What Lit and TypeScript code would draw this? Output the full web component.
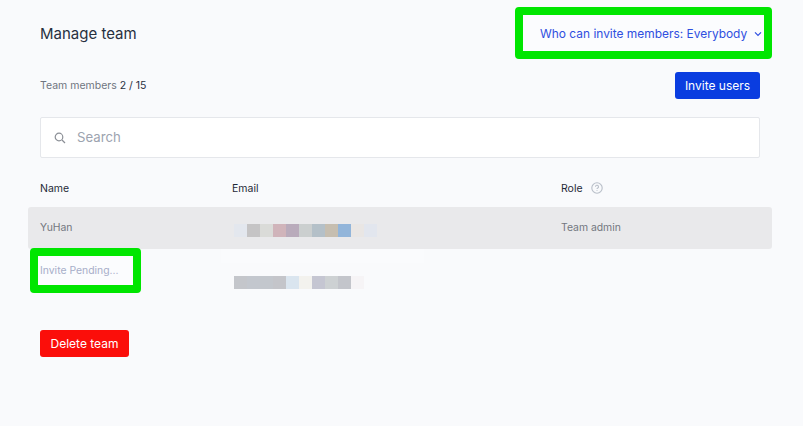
import { LitElement, html, css } from "lit";
import { customElement } from "lit/decorators.js";

const ROW1 = ["#e3e7ee","#c5c4c5","#dadbd8","#d0b4ba","#b9abbb","#cbcfcf","#b4c0c8","#c6beb0","#92b5da","#e9e6e4","#e2e6ee"];
const ROW2 = ["#c4c6cb","#c3c7ce","#c3c7cd","#c4c5ca","#dae5ef","#f3f2ee","#c5c6d2","#cdd1d3","#c3c5cb","#f6f4f6"];

@customElement("app-root")
export class AppRoot extends LitElement {
  static styles = css`
    :host { display: block; width: 803px; height: 426px; overflow: hidden; }
    .page {
      box-sizing: border-box; width: 803px; height: 426px; background: #f9fafc;
      padding: 7px 43px 0 40px; font-family: Inter, "Liberation Sans", sans-serif;
      color: #1f2937;
    }
    .head { display: flex; justify-content: space-between; align-items: center; height: 52px; margin-right: -12px; }
    .title { font-size: 15px; font-weight: 400; color: #27303f; margin: 0; }
    .mark { box-sizing: border-box; border: 8px solid #00e600; border-radius: 4px; background: #fbfcfe; }
    .who {
      width: 257px; height: 52px; display: flex; align-items: center; gap: 6px; padding-left: 17px;
      font-size: 11.95px; color: #2f4fe0; white-space: nowrap;
    }
    .who svg { display: block; margin-top: 1px; margin-left: 1px; flex: none; }
    .members { display: flex; justify-content: space-between; align-items: center; margin-top: 12px; height: 28px; }
    .count { font-size: 10.5px; color: #6f7580; }
    .count b { font-weight: 400; color: #27303f; }
    .btn {
      border: 0; border-radius: 3px; font-family: inherit; color: #fff; font-size: 12px;
      display: flex; align-items: center; justify-content: center; padding: 0;
    }
    .invite { width: 85px; height: 27px; background: #0a3de0; }
    .search {
      box-sizing: border-box; margin-top: 18px; height: 41px; background: #fff; border: 1px solid #e5e7eb;
      display: flex; align-items: center; gap: 11px; padding-left: 13px; border-radius: 2px;
      font-size: 13.2px; color: #9ca3af;
    }
    .search span { margin-top: -1px; }
    .cols { display: grid; grid-template-columns: 192px 329px 1fr; }
    .th { margin-top: 11px; height: 38px; align-items: center; font-size: 10.5px; color: #1f2937; }
    .th > div { display: flex; align-items: center; gap: 8px; }
    .row { height: 42px; margin: 0 -12px; padding: 0 12px 2px; box-sizing: border-box; align-items: center; background: #e9e9eb; border-radius: 3px; font-size: 10.4px; color: #73777f; }
    .blur { display: flex; margin-left: 2px; }
    .blur i { display: block; width: 13px; height: 13px; }
    .r1 .blur { margin-top: 7px; }
    .pending-row { position: relative; height: 44px; }
    .pending {
      box-sizing: border-box; position: absolute; left: -10px; top: -1px; width: 111px; height: 45px;
      display: flex; align-items: center; padding: 0 0 1px 2px; font-size: 10.4px; color: #a7aec9;
    }
    .band { position: absolute; left: 181px; top: 0; width: 203px; height: 14px; background: #fafbfd; }
    .blur2 { position: absolute; left: 192px; top: 27px; }
    .delete { margin-top: 37px; width: 89px; height: 27px; background: #fb0e0a; }
  `;

  render() {
    return html`
      <div class="page">
        <div class="head">
          <h1 class="title">Manage team</h1>
          <div class="who mark">
            <span>Who can invite members: Everybody</span>
            <svg width="8" height="6" viewBox="0 0 8 6" fill="none" stroke="#2f4fe0" stroke-width="1.2"><path d="M1 1.3l3 3 3-3"/></svg>
          </div>
        </div>
        <div class="members">
          <div class="count">Team members <b>2 / 15</b></div>
          <button class="btn invite">Invite users</button>
        </div>
        <div class="search">
          <svg width="12" height="12" viewBox="0 0 12 12" fill="none" stroke="#8b8f96" stroke-width="1.2"><circle cx="5" cy="5" r="3.8"/><path d="M8 8l3 3"/></svg>
          <span>Search</span>
        </div>
        <div class="cols th">
          <div>Name</div>
          <div>Email</div>
          <div>Role
            <svg width="12" height="12" viewBox="0 0 12 12" fill="none" stroke="#b9bfc9" stroke-width="1.1"><circle cx="6" cy="6" r="5.2"/><path d="M4.5 4.8a1.5 1.5 0 1 1 2.3 1.2c-.5.3-.8.6-.8 1.1"/><path d="M6 8.2v.9"/></svg>
          </div>
        </div>
        <div class="cols row r1">
          <div>YuHan</div>
          <div class="blur">${ROW1.map((c) => html`<i style="background:${c}"></i>`)}</div>
          <div>Team admin</div>
        </div>
        <div class="pending-row">
          <div class="pending mark">Invite Pending...</div>
          <div class="band"></div>
          <div class="blur blur2">${ROW2.map((c) => html`<i style="background:${c}"></i>`)}</div>
        </div>
        <button class="btn delete">Delete team</button>
      </div>
    `;
  }
}
